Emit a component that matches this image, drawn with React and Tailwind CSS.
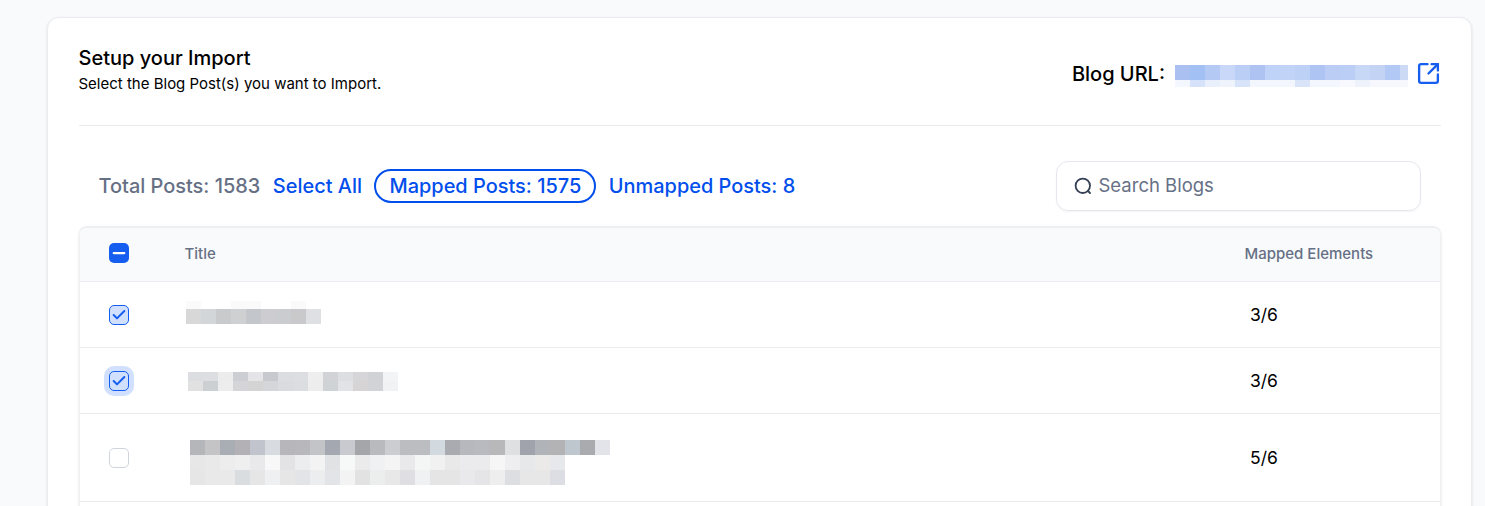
import React from "react";
import { Check, Minus, SquareArrowOutUpRight } from "lucide-react";

const urlBlur = [
  ["#a9c0f0", "#a3c0f5", "#b4c9f3", "#c9d8f8", "#bbcff6", "#aec3f2", "#bfd2f7", "#c1d3f7", "#bdd0f6", "#aec5f3", "#bbcdf5", "#bbcef5", "#c7d7f6", "#c3d3f4", "#b3c9f5", "#ccdaf6"],
  ["#f4f7fe", "#d5e2f9", "#e9effb", "#eef3fc", "#d7e3f9", "#f3f6fd", "#f3f6fd", "#f3f6fd", "#d9e4f8", "#f3f6fd", "#f3f6fd", "#f7f9fe", "#eef2fb", "#f6f8fe", "#f6f8fe", "#f6f8fe"],
];

const rows = [
  {
    value: "3/6",
    state: "checked",
    height: "h-[66px]",
    offset: "ml-[1px] mb-[4px]",
    blur: [
      { h: "h-[8px]", colors: ["#fafafa", "#ffffff", "#ffffff", "#fbfafa", "#fbfafa", "#ffffff", "#ffffff", "#fbfafa", "#ffffff"] },
      { h: "h-[15px]", colors: ["#d9d8d8", "#d3d6d9", "#c9cacc", "#cfd0d2", "#c3c6cb", "#cdcdd1", "#cbccd0", "#c9c9cb", "#dfe0e4"] },
    ],
  },
  {
    value: "3/6",
    state: "focused",
    height: "h-[66px]",
    offset: "ml-[3px] mt-[2px]",
    blur: [
      { h: "h-[9px]", colors: ["#dcdde0", "#dddee1", "#ececec", "#cdced3", "#e5e5e7", "#c8c9ce", "#dcdde1", "#dddee1", "#eeeeee", "#d2d3d6", "#dddee2", "#d6d6d8", "#d0d2d5", "#f3f4f6"] },
      { h: "h-[10px]", colors: ["#e1e1e1", "#ccd0d3", "#ededed", "#d5d5d9", "#d4d4d5", "#d5d6da", "#d9dbdf", "#dcdde0", "#ededed", "#d0d3d6", "#e1e3e6", "#d7d4d5", "#d1d3d6", "#f1f2f4"] },
    ],
  },
  {
    value: "5/6",
    state: "empty",
    height: "h-[88px]",
    offset: "ml-[5px] mt-[10px]",
    blur: [
      { h: "h-[15px]", colors: ["#b5b6b9", "#c4c4c6", "#a9adb4", "#b3b1b6", "#c1c4cc", "#d8dbe0", "#b7b6bb", "#b8b7bb", "#c3c4c8", "#a3a8b1", "#c9cacf", "#a5a6aa", "#b9babe", "#cccdd1", "#bcbdc0", "#bcbdc0", "#d3dadf", "#a9abb0", "#b6b8bd", "#b9bac0", "#b8b8bb", "#dfe0e2", "#a0a3ac", "#b0b3b8", "#b3b3b5", "#bec6ce", "#aaabaf", "#e3e4e9"] },
      { h: "h-[15px]", colors: ["#e7e7e8", "#e9e9ea", "#ededee", "#efeff0", "#e9e9eb", "#f8f8f8", "#e3e3e5", "#ecedef", "#f3f3f4", "#e1e2e4", "#f7f8f8", "#ebebeb", "#f0f1f2", "#f4f4f5", "#e9e9eb", "#f4f5f5", "#f1f1f1", "#e9e9e9", "#ebebed", "#ebebed", "#f6f6f6", "#eeeef0", "#e7e8ea", "#ece9e9", "#e7e8eb"] },
      { h: "h-[15px]", colors: ["#e6e6e7", "#e9e9ea", "#e9e9ea", "#d9dde0", "#e6e6e6", "#eff0f1", "#e6e6e6", "#e3e4e7", "#ecedee", "#e3e4e8", "#f3f3f4", "#e2e2e2", "#eceded", "#e8e8e9", "#dfdfe3", "#f0f1f2", "#e5e5e6", "#e5e5e5", "#e9e9ec", "#e5e5e7", "#eeeeef", "#dddee2", "#e7e7e8", "#e7e7e8", "#dddee3"] },
    ],
  },
];

// pixelated placeholder for the redacted text
function Blur({ lines }) {
  return (
    <div className="flex flex-col">
      {lines.map((line, i) => (
        <div key={i} className={`flex ${line.h}`}>
          {line.colors.map((c, j) => (
            <div key={j} className="w-[15px] shrink-0" style={{ backgroundColor: c }} />
          ))}
        </div>
      ))}
    </div>
  );
}

function Checkbox({ state }) {
  if (state === "indeterminate") {
    return (
      <div className="w-5 h-5 rounded-[5px] bg-[#155eef] flex items-center justify-center">
        <Minus size={18} strokeWidth={3} className="text-white" />
      </div>
    );
  }
  if (state === "empty") {
    return <div className="w-5 h-5 rounded-[5px] border border-[#d0d5dd] bg-white" />;
  }
  return (
    <div
      className={`w-5 h-5 rounded-[5px] border border-[#155eef] flex items-center justify-center ${
        state === "focused" ? "bg-[#d1e0ff] ring-[5px] ring-[#d1e0ff]" : "bg-[#d1e0ff]"
      }`}
    >
      <Check size={16} strokeWidth={3} className="text-[#155eef]" />
    </div>
  );
}

export default function App() {
  return (
    <div className="h-screen overflow-hidden bg-[#f9fafb] pt-[17px] pl-[47px] pr-[13px] font-['Inter',sans-serif] text-black">
      <div className="bg-white border border-[#eaecf0] rounded-xl shadow-sm pl-[31px] pr-[30px]">
        {/* header */}
        <div className="flex justify-between h-[108px] border-b border-[#eaecf0] pt-[26px]">
          <div>
            <h1 className="text-[20px] font-medium leading-[28px] -ml-[0.5px]">Setup your Import</h1>
            <p className="text-[15px] leading-[24px] -ml-[0.5px]">Select the Blog Post(s) you want to Import.</p>
          </div>
          <div className="flex items-center h-[60px]">
            <span className="text-[20px] font-medium mr-[10px]">Blog URL:</span>
            <div className="w-[233px] overflow-hidden mt-[4px]">
              <div className="flex h-[15px]">
                {urlBlur[0].map((c, i) => (
                  <div key={i} className="w-[15px] shrink-0" style={{ backgroundColor: c }} />
                ))}
              </div>
              <div className="flex h-[7px]">
                {urlBlur[1].map((c, i) => (
                  <div key={i} className="w-[15px] shrink-0" style={{ backgroundColor: c }} />
                ))}
              </div>
            </div>
            <SquareArrowOutUpRight size={25} strokeWidth={2.25} className="text-[#155eef] ml-[8px] mb-[2px]" />
          </div>
        </div>

        {/* toolbar */}
        <div className="flex items-center justify-between pl-[19.5px] pr-5 mt-[35px] mb-4 h-[50px]">
          <div className="flex items-center gap-[12.5px] text-[19.95px] font-medium text-[#004eeb]">
            <span className="text-[#667085] pt-[2px]">Total Posts: 1583</span>
            <span className="pt-[2px]">Select All</span>
            <span className="border-2 border-[#004eeb] rounded-full px-[13px] pt-[2px] h-[34px] flex items-center">Mapped Posts: 1575</span>
            <span className="pt-[2px]">Unmapped Posts: 8</span>
          </div>
          <div className="w-[365px] h-[50px] border border-[#e4e7ec] rounded-xl flex items-center pl-[17px] shadow-xs">
            <svg width="18" height="18" viewBox="0 0 18 18" fill="none" stroke="#344054" strokeWidth="1.8" strokeLinecap="round" className="mr-[6.5px]">
              <circle cx="8.8" cy="8.8" r="7.2" />
              <path d="M14 14l2 2" />
            </svg>
            <span className="text-[18.5px] text-[#667085]">Search Blogs</span>
          </div>
        </div>

        {/* table */}
        <div className="border-x border-b border-t-2 border-x-[#eef0f3] border-b-[#eaecf0] border-t-[#eeeff2] rounded-lg shadow-sm overflow-hidden -mt-[1px]">
          <div className="flex items-center h-[54px] bg-[#f9fafb] border-b border-[#eaecf0] text-[15px] font-medium text-[#667085] pb-[4px]">
            <div className="w-[105px] pl-[29px] shrink-0">
              <Checkbox state="indeterminate" />
            </div>
            <div className="flex-1 pt-[4px] -ml-[0.5px]">Title</div>
            <div className="w-[195.5px] shrink-0 pt-[4px]">Mapped Elements</div>
          </div>
          {rows.map((row, i) => (
            <div key={i} className={`flex items-center ${row.height} border-b border-[#eaecf0]`}>
              <div className="w-[105px] pl-[29px] shrink-0">
                <Checkbox state={row.state} />
              </div>
              <div className={`flex-1 ${row.offset}`}>
                <Blur lines={row.blur} />
              </div>
              <div className="w-[190px] shrink-0 text-[17.5px] font-normal pt-[1px]">{row.value}</div>
            </div>
          ))}
          <div className="h-[66px]" />
        </div>
      </div>
    </div>
  );
}
